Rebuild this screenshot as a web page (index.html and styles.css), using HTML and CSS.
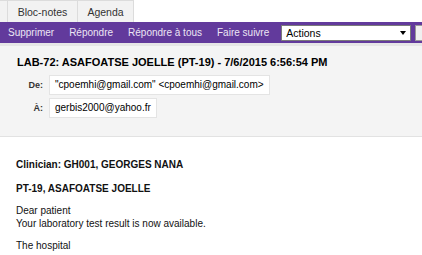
FILE: index.html
```html
<!DOCTYPE html>
<html lang="fr">
<head>
    <meta charset="UTF-8">
    <title>LAB-72</title>
    <link rel="stylesheet" href="styles.css">
</head>
<body>
<div class="tabs">
    <div class="tab tab-cut"></div>
    <div class="tab">Bloc-notes</div>
    <div class="tab">Agenda</div>
</div>
<div class="toolbar">
    <span class="action">Supprimer</span>
    <span class="action">Répondre</span>
    <span class="action">Répondre à tous</span>
    <span class="action">Faire suivre</span>
    <div class="select">
        <span>Actions</span>
        <span class="arrow"></span>
    </div>
    <div class="go"></div>
</div>
<div class="header">
    <h1>LAB-72: ASAFOATSE JOELLE (PT-19) - 7/6/2015 6:56:54 PM</h1>
    <div class="field">
        <span class="label">De:</span>
        <span class="value">"cpoemhi@gmail.com" &lt;cpoemhi@gmail.com&gt;</span>
    </div>
    <div class="field">
        <span class="label">À:</span>
        <span class="value">gerbis2000@yahoo.fr</span>
    </div>
</div>
<div class="message">
    <p class="strong">Clinician: GH001, GEORGES NANA</p>
    <p class="strong">PT-19, ASAFOATSE JOELLE</p>
    <p>Dear patient<br>Your laboratory test result is now available.</p>
    <p>The hospital</p>
</div>
</body>
</html>
```

FILE: styles.css
```css
/* page */
body {
    margin: 0;
    font-family: "Liberation Sans", Arial, sans-serif;
    font-size: 10px;
    color: #111;
    background: #fff;
    overflow: hidden;
}

/* onglets */
.tabs {
    display: flex;
    height: 22px;
}

.tab {
    box-sizing: border-box;
    height: 22px;
    padding-top: 5px;
    width: 70px;
    text-align: center;
    background: #f2f2f2;
    border: 1px solid #dcdcdc;
    border-left: none;
    border-bottom: none;
    color: #333;
    font-size: 10.5px;
    white-space: nowrap;
}

.tab-cut {
    width: 8px;
}

.tab:last-child {
    width: 56px;
}

/* barre d'actions */
.toolbar {
    display: flex;
    align-items: center;
    height: 21px;
    background: #623a9c;
    padding-left: 8px;
    border-bottom: 3px solid #e6e6e6;
    white-space: nowrap;
}

.action {
    color: #ece6f4;
    font-size: 10px;
    margin-right: 15px;
}

.select {
    box-sizing: border-box;
    display: flex;
    align-items: center;
    justify-content: space-between;
    flex: none;
    width: 130px;
    height: 16px;
    margin-left: -3px;
    padding: 0 4px;
    background: #fff;
    border: 1px solid #7a7a7a;
    color: #000;
    font-size: 10.5px;
}

.arrow {
    width: 0;
    height: 0;
    border-left: 3px solid transparent;
    border-right: 3px solid transparent;
    border-top: 4px solid #000;
}

.go {
    flex: none;
    width: 12px;
    height: 14px;
    margin-left: 4px;
    background: #f0f0f0;
    border: 1px solid #999;
}

/* en-tête du message */
.header {
    background: #f4f4f4;
    border-bottom: 1px solid #e2e2e2;
    padding: 10px 0 18px 17px;
}

.header h1 {
    margin: 0 0 6px;
    font-size: 11px;
    line-height: 13px;
    font-weight: bold;
    color: #000;
}

.field {
    display: flex;
    align-items: center;
    margin-bottom: 3px;
}

.field:last-child {
    margin-bottom: 0;
}

.label {
    width: 26px;
    text-align: right;
    margin-right: 6px;
    font-size: 9px;
    font-weight: bold;
    color: #333;
}

.value {
    box-sizing: border-box;
    height: 20px;
    line-height: 18px;
    padding: 0 5px;
    background: #fff;
    border: 1px solid #e4e4e4;
    font-size: 10px;
    color: #000;
}

/* corps */
.message {
    padding: 21px 16px 0;
}

.message p {
    margin: 0 0 9px;
    font-size: 10px;
    line-height: 13px;
    color: #111;
}

.message .strong {
    font-weight: bold;
}

.message .strong:first-child {
    margin-bottom: 11px;
}
```
